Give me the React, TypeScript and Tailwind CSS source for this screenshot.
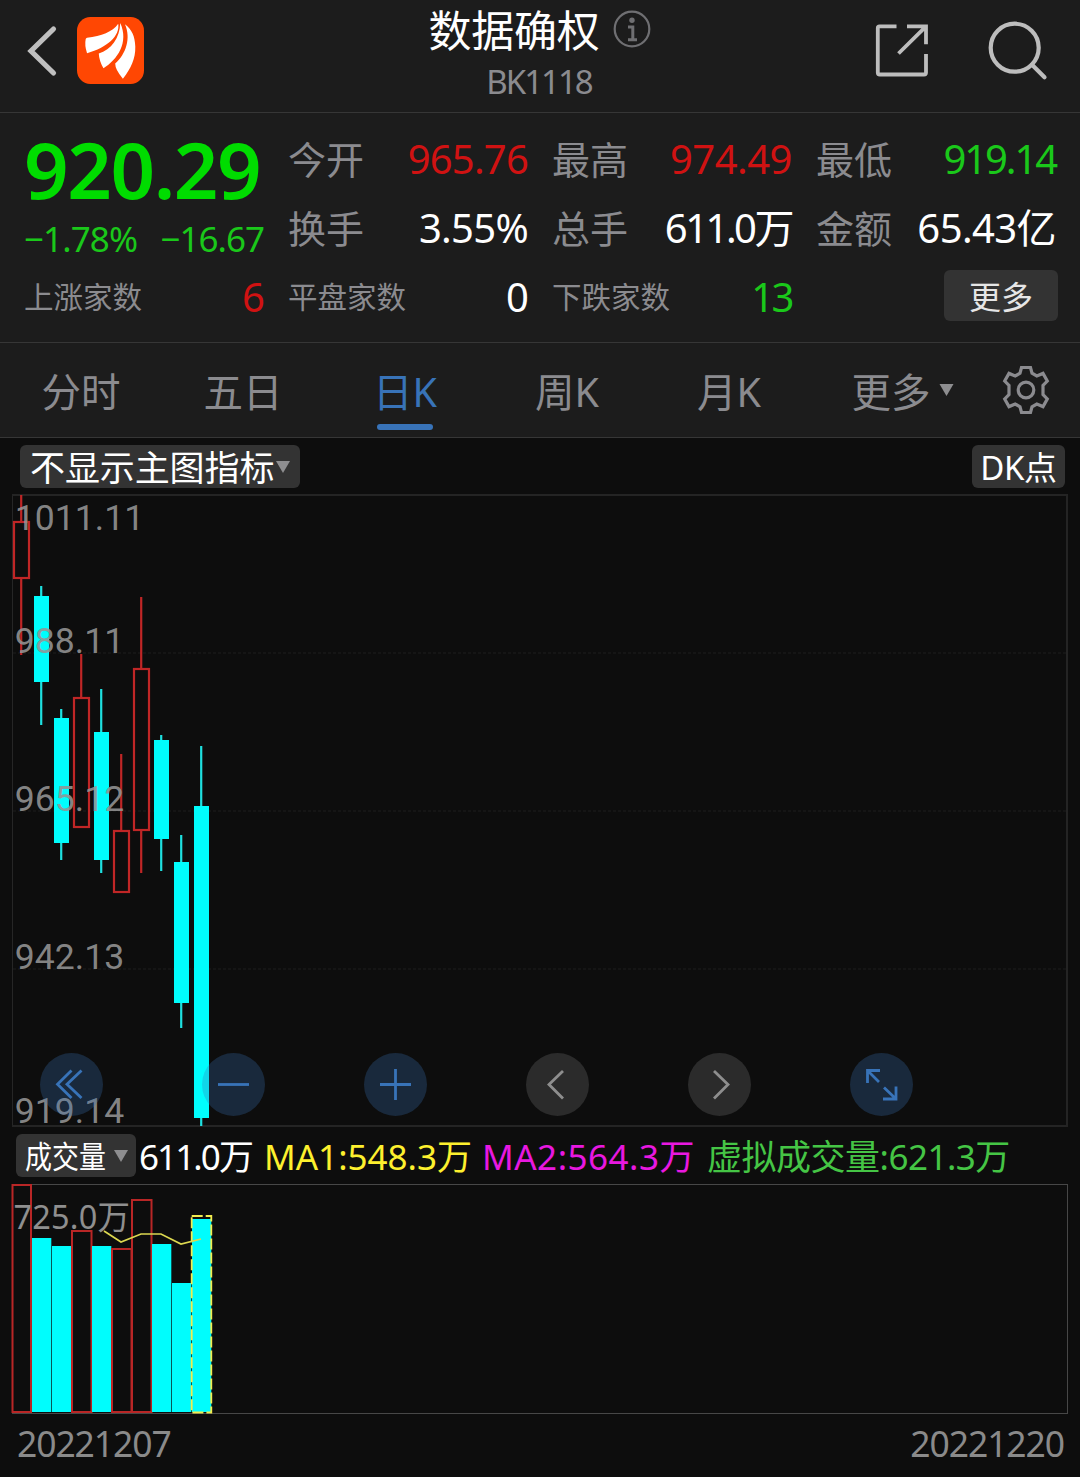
import clsx from "clsx"

type Bar = {
    up: boolean
    high: number
    top: number
    bottom: number
    low: number
    volume: number
}

// vertical positions in chart pixels, one entry per trading day
const bars: Bar[] = [
    { up: true, high: 495, top: 521, bottom: 579, low: 655, volume: 1184 },
    { up: false, high: 586, top: 596, bottom: 682, low: 725, volume: 1238 },
    { up: false, high: 709, top: 718, bottom: 843, low: 860, volume: 1246 },
    { up: true, high: 654, top: 697, bottom: 828, low: 828, volume: 1230 },
    { up: false, high: 689, top: 732, bottom: 860, low: 873, volume: 1246 },
    { up: true, high: 754, top: 830, bottom: 893, low: 893, volume: 1248 },
    { up: true, high: 597, top: 668, bottom: 831, low: 873, volume: 1199 },
    { up: false, high: 735, top: 740, bottom: 839, low: 871, volume: 1244 },
    { up: false, high: 835, top: 862, bottom: 1003, low: 1028, volume: 1283 },
    { up: false, high: 746, top: 806, bottom: 1118, low: 1126, volume: 1219 },
]

const priceLabels = [
    { y: 530, text: "1011.11" },
    { y: 653, text: "988.11" },
    { y: 811, text: "965.12" },
    { y: 969, text: "942.13" },
    { y: 1123, text: "919.14" },
]

const tabs = ["分时", "五日", "日K", "周K", "月K", "更多"]

function Triangle({ className }: { className?: string }) {
    return (
        <svg viewBox="0 0 14 12" className={className} fill="#8e8e90">
            <path d="M0 0H14L7 12Z" />
        </svg>
    )
}

function Header() {
    return (
        <header className="flex h-[113px] items-start justify-between border-b border-[#363636]">
            <div className="flex w-[300px] items-center pl-[26px] pt-[17px]">
                <svg width="32" height="52" viewBox="0 0 32 52" fill="none" stroke="#bfbfbf" strokeWidth="5.2" strokeLinecap="round">
                    <path d="M27.5 4L5 26L27.5 48" />
                </svg>
                <svg width="67" height="67" viewBox="232 52 200 200" className="ml-[19px]">
                    <rect x="232" y="52" width="200" height="200" rx="40" fill="#ff4703" />
                    <g fill="#fff">
                        <path d="M262 114C305 108 338 97 355 72C361 108 322 143 262 160Q254 137 258 118Q259 115 262 114Z" />
                        <path d="M361 70C360 115 334 150 297 161Q298 183 311 205C352 180 388 128 361 70Z" />
                        <path d="M375 74C394 115 378 164 346 191Q346 210 369 236C393 206 407 176 406 140C405 110 396 90 375 74Z" />
                    </g>
                </svg>
            </div>
            <div className="flex flex-col items-center">
                <div className="flex h-[60px] items-center gap-[14px]">
                    <h1 className="mt-[2px] text-[43px] font-normal leading-[60px] tracking-[-0.3px] text-white">数据确权</h1>
                    <svg width="38" height="38" viewBox="0 0 38 38" fill="none" stroke="#6f6f72" className="-mt-[3px]">
                        <circle cx="19" cy="19" r="17.3" strokeWidth="2.2" />
                        <circle cx="19" cy="10.2" r="2.7" fill="#6f6f72" stroke="none" />
                        <path d="M15 17H19.8V29.5M15 29.8H24" strokeWidth="3" />
                    </svg>
                </div>
                <div className="mr-[2px] text-[33px] leading-[44px] tracking-[-2px] text-[#8b8b8f]">BK1118</div>
            </div>
            <div className="flex w-[300px] justify-end gap-[56px] pr-[32px] pt-[20px]">
                <svg width="56" height="60" viewBox="874 20 56 60" fill="none" stroke="#bdbdbd" strokeWidth="3.8">
                    <path d="M896.5 26.3H879.5Q877.8 26.3 877.8 28V72.5Q877.8 74.5 879.8 74.5H924Q926 74.5 926 72.5V54" />
                    <path d="M907 26.3H926V44.3M898.5 53.5L925 27.3" />
                </svg>
                <svg width="62" height="62" viewBox="986 20 62 62" fill="none" stroke="#bdbdbd" strokeWidth="4.2">
                    <circle cx="1014.7" cy="47.7" r="24" />
                    <path d="M1032 64.7L1044.5 77.3" strokeLinecap="round" />
                </svg>
            </div>
        </header>
    )
}

type StatProps = {
    label: string
    value: string
    valueClass?: string
    small?: boolean
}

function Stat({ label, value, valueClass = "text-white", small }: StatProps) {
    return (
        <div className="flex h-[69px] items-center justify-between whitespace-nowrap leading-[60px]">
            <span className={clsx("text-[#8b8b8f]", small ? "text-[29.5px]" : "text-[38px]")}>{label}</span>
            <span className={clsx("text-[40px]", valueClass)}>{value}</span>
        </div>
    )
}

function Quote() {
    return (
        <section className="grid h-[230px] grid-cols-4 content-start gap-x-6 border-b border-[#363636] px-6 pt-[11px]">
            <div className="row-span-2 h-[138px] whitespace-nowrap pt-[6px]">
                <div className="h-[78px] text-[78px] font-semibold leading-[78px] tracking-[-1.4px] text-[#00dc00]">920.29</div>
                <div className="mt-[12px] flex justify-between text-[35px] leading-[38px] text-[#1ac81a]">
                    <span className="tracking-[-0.9px]">−1.78%</span>
                    <span className="tracking-[-1px]">−16.67</span>
                </div>
            </div>
            <Stat label="今开" value="965.76" valueClass="text-[#d01212] tracking-[-0.8px]" />
            <Stat label="最高" value="974.49" valueClass="text-[#d01212] tracking-[-0.5px]" />
            <Stat label="最低" value="919.14" valueClass="text-[#1ac81a] tracking-[-2.1px]" />
            <Stat label="换手" value="3.55%" valueClass="text-white tracking-[-0.7px]" />
            <Stat label="总手" value="611.0万" valueClass="text-white tracking-[-2.5px]" />
            <Stat label="金额" value="65.43亿" valueClass="text-white tracking-[-0.6px]" />
            <Stat small label="上涨家数" value="6" valueClass="text-[#d01212] tracking-[-1px]" />
            <Stat small label="平盘家数" value="0" valueClass="text-white tracking-[-1px]" />
            <Stat small label="下跌家数" value="13" valueClass="text-[#1ac81a] tracking-[-2.5px]" />
            <div className="flex h-[69px] items-center justify-end pb-[2px]">
                <button className="-mr-[2px] h-[51px] w-[114px] rounded-md bg-[#333] text-[32px] leading-[53px] text-[#e6e6e6]">更多</button>
            </div>
        </section>
    )
}

function Tabs() {
    return (
        <nav className="flex h-[95px] border-b border-[#363636] text-[39.5px] text-[#8b8b8f]">
            {tabs.map((tab) => (
                <div
                    key={tab}
                    className={clsx("relative flex w-[162px] flex-col items-center", tab === "日K" && "text-[#3873b8]")}
                >
                    <span className="h-[81px] leading-[98px]">{tab}</span>
                    {tab === "日K" && <span className="h-[6px] w-[56px] rounded-full bg-[#3873b8]" />}
                    {tab === "更多" && <Triangle className="absolute right-[18px] top-[41px] h-[12px] w-[15px]" />}
                </div>
            ))}
            <div className="flex flex-1 items-center justify-center">
                <svg width="52" height="52" viewBox="-26 -26 52 52" fill="none" stroke="#8b8b8f" strokeWidth="3.2">
                    <path d="M-4.5-22.5H4.5L6-16.8L10.8-14L17-16.6L21.3-9L17-4.5V4.5L21.3 9L17 16.6L10.8 14L6 16.8L4.5 22.5H-4.5L-6 16.8L-10.8 14L-17 16.6L-21.3 9L-17 4.5V-4.5L-21.3-9L-17-16.6L-10.8-14L-6-16.8Z" />
                    <circle r="7.8" />
                </svg>
            </div>
        </nav>
    )
}

function CandleChart() {
    return (
        <svg width="1080" height="634" viewBox="0 494 1080 634" className="block">
            <path d="M12.5 495V1126" stroke="#262626" />
            <path d="M12 495H1067V1126H12" fill="none" stroke="#242424" strokeWidth="2" />
            {[653, 811, 969].map((y) => (
                <path key={y} d={`M13 ${y}H1066`} stroke="#191919" strokeWidth="1.5" strokeDasharray="3 2" />
            ))}
            {bars.map((bar, i) => {
                const x = 21.2 + i * 20
                return bar.up ? (
                    <g key={i} fill="none" stroke="#c02626" strokeWidth="2.2">
                        <path d={`M${x} ${bar.high}V${bar.top}M${x} ${bar.bottom}V${bar.low}`} />
                        <rect x={x - 7.2} y={bar.top + 1} width="15" height={bar.bottom - bar.top - 2} />
                    </g>
                ) : (
                    <g key={i}>
                        <path d={`M${x} ${bar.high}V${bar.low}`} stroke="#1ee0e0" strokeWidth="2.2" />
                        <rect x={x - 7.2} y={bar.top} width="15" height={bar.bottom - bar.top} fill="#00fdfd" />
                    </g>
                )
            })}
            <g fill="#949494" fillOpacity="0.9" fontSize="35.6" fontFamily="Roboto, sans-serif">
                {priceLabels.map((label) => (
                    <text key={label.text} x="14.8" y={label.y}>{label.text}</text>
                ))}
            </g>
        </svg>
    )
}

const controls = [
    { d: "M31.5 17.5L17.5 31.3L31.5 45M41.5 17.5L27 31.3L41.5 45", active: true },
    { d: "M16 31.5H47", active: true },
    { d: "M16 31.5H47M31.5 16V47", active: true },
    { d: "M37 18L23 31.5L37 45.5", active: false },
    { d: "M26 18L40 31.5L26 45.5", active: false },
    { d: "M30 17.5H17.5V30M17.5 17.5L29 29M34 34.5L46 46M33 46H46V33.5", active: true },
]

function Controls() {
    return (
        <div className="absolute left-[40px] top-[559px] flex gap-[99px]">
            {controls.map((control) => (
                <button
                    key={control.d}
                    className={clsx("size-[63px] rounded-full", control.active ? "bg-[#3873b8]/28" : "bg-[#2b2b2b]")}
                >
                    <svg viewBox="0 0 63 63" fill="none" stroke={control.active ? "#3873b8" : "#8e8e8e"} strokeWidth="2.8">
                        <path d={control.d} />
                    </svg>
                </button>
            ))}
        </div>
    )
}

function VolumeChart() {
    return (
        <svg width="1080" height="232" viewBox="0 1183 1080 232" className="block">
            <rect x="12.5" y="1184.5" width="1055" height="229" fill="none" stroke="#474747" />
            {bars.map((bar, i) => {
                const x = 12 + i * 20
                return bar.up ? (
                    <rect
                        key={i}
                        x={i ? x : 12.5}
                        y={bar.volume + 1}
                        width={i ? 19.5 : 18.5}
                        height={1411 - bar.volume}
                        fill="none"
                        stroke="#b92626"
                        strokeWidth="2"
                    />
                ) : (
                    <rect key={i} x={x} y={bar.volume} width="19.3" height={1412 - bar.volume} fill="#00fdfd" />
                )
            })}
            <rect x="191.7" y="1216" width="19.6" height="196.5" fill="none" stroke="#f2ec4e" strokeWidth="1.8" strokeDasharray="11 3" />
            <path d="M104 1231L121 1242L141 1234H161L181 1244L201 1239" fill="none" stroke="#dcd850" strokeWidth="1.7" />
            <text x="13.5" y="1229" fill="#8f8f8f" fontSize="32.5" letterSpacing="0.2">725.0万</text>
        </svg>
    )
}

export default function App() {
    return (
        <div className="h-[1477px] w-[1080px] overflow-hidden bg-[#0d0d0d] font-['Noto_Sans','Noto_Sans_CJK_SC',sans-serif]">
            <div className="bg-[#1c1c1c]">
                <Header />
                <Quote />
                <Tabs />
            </div>
            <div className="flex h-[56px] items-start justify-between pl-[20px] pr-[15px] pt-[7px] text-white">
                <div className="flex h-[43px] w-[280px] items-center rounded-md bg-[#333] pl-[10px]">
                    <span className="mt-[2px] text-[35px] leading-[43px] tracking-[-0.1px]">不显示主图指标</span>
                    <Triangle className="ml-[2px] h-[12px] w-[14px]" />
                </div>
                <div className="h-[43px] w-[93px] rounded-md bg-[#333] text-center text-[33px] leading-[45px] tracking-[-0.3px]">
                    DK点
                </div>
            </div>
            <div className="relative">
                <CandleChart />
                <Controls />
            </div>
            <div className="flex h-[55px] items-start whitespace-nowrap pl-[16px] pt-[6px] text-[35px] leading-[45px]">
                <div className="flex h-[43px] w-[120px] items-center rounded-md bg-[#333] pl-[9px] text-white">
                    <span className="mt-[2px] w-[80px] origin-left scale-x-87 text-[31px]">成交量</span>
                    <Triangle className="ml-[9px] h-[12px] w-[14px]" />
                </div>
                <span className="ml-[3px] w-[125px] tracking-[-1.9px] text-white">611.0万</span>
                <span className="w-[218px] text-[#fdf02e]">MA1:548.3万</span>
                <span className="w-[225px] tracking-[0.5px] text-[#e818e0]">MA2:564.3万</span>
                <span className="tracking-[-0.5px] text-[#45c545]">虚拟成交量:621.3万</span>
            </div>
            <VolumeChart />
            <div className="flex justify-between pl-[17px] pr-[16px] pt-[3px] text-[35.5px] leading-[51px] tracking-[-1.1px] text-[#8a8a8a]">
                <span>20221207</span>
                <span>20221220</span>
            </div>
        </div>
    )
}
